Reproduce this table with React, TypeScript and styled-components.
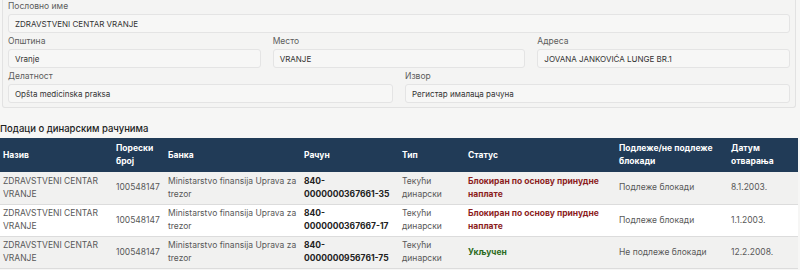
import React from "react";
import styled, { createGlobalStyle } from "styled-components";

const Global = createGlobalStyle`
  html, body { margin: 0; padding: 0; background: #f6f6f5; }
  body { font-family: Inter, "Liberation Sans", sans-serif; color: #444; }
  * { box-sizing: border-box; }
`;

const Page = styled.div`
  width: 800px;
`;

const Panel = styled.section`
  margin: 0 4px 0 2px;
  border: 1px solid #e2e2e2;
  border-top: none;
  border-radius: 0 0 3px 3px;
  background: #f4f4f3;
  padding: 0 5px 4px 5px;
  display: flex;
  flex-direction: column;
  gap: 2px;
`;

const Row = styled.div<{ $cols: number }>`
  display: grid;
  grid-template-columns: repeat(${(p) => p.$cols}, 1fr);
  column-gap: 12px;
`;

const Field = styled.div`
  display: flex;
  flex-direction: column;
`;

const Label = styled.label`
  font-size: 8.5px;
  line-height: 12px;
  color: #5c5c5c;
  margin-bottom: 2px;
`;

const Input = styled.div`
  height: 19px;
  border: 1px solid #e4e4e4;
  border-radius: 3px;
  background: #f7f7f6;
  font-size: 8px;
  color: #333;
  display: flex;
  align-items: center;
  padding: 0 6px;
`;

const Heading = styled.h3`
  margin: 14px 0 2px 0;
  font-size: 9.5px;
  line-height: 14px;
  font-weight: 500;
  color: #222;
`;

const Table = styled.table`
  width: 798px;
  border-collapse: collapse;
  table-layout: fixed;
`;

const Th = styled.th<{ $w: number }>`
  width: ${(p) => p.$w}px;
  background: #213b57;
  color: #fff;
  text-align: left;
  font-size: 8.5px;
  font-weight: 700;
  line-height: 13px;
  height: 34px;
  padding: 0 3px;
  vertical-align: middle;
`;

const Tr = styled.tr<{ $alt?: boolean }>`
  background: ${(p) => (p.$alt ? "#ffffff" : "#f1f1f0")};
  border-bottom: 1px solid #dcdcdc;
`;

const Td = styled.td<{ $tone?: "num" | "red" | "green" }>`
  font-size: 8.5px;
  line-height: 13px;
  height: 32px;
  padding: 0 3px;
  vertical-align: middle;
  color: ${(p) =>
    p.$tone === "num" ? "#222" : p.$tone === "red" ? "#8c1d1d" : p.$tone === "green" ? "#2c6b22" : "#585858"};
  font-weight: ${(p) => (p.$tone ? 700 : 400)};
`;

const cols = [
  { t: "Назив", w: 113 },
  { t: "Порески број", w: 52 },
  { t: "Банка", w: 136 },
  { t: "Рачун", w: 98 },
  { t: "Тип", w: 66 },
  { t: "Статус", w: 151 },
  { t: "Подлеже/не подлеже блокади", w: 112 },
  { t: "Датум отварања", w: 70 },
];

const rows = [
  { acc: "840-0000000367661-35", status: "Блокиран по основу принудне наплате", red: true, sub: "Подлеже блокади", date: "8.1.2003." },
  { acc: "840-0000000367667-17", status: "Блокиран по основу принудне наплате", red: true, sub: "Подлеже блокади", date: "1.1.2003." },
  { acc: "840-0000000956761-75", status: "Укључен", red: false, sub: "Не подлеже блокади", date: "12.2.2008." },
];

export default function App() {
  return (
    <Page>
      <Global />
      <Panel>
        <Row $cols={1}>
          <Field>
            <Label>Пословно име</Label>
            <Input>ZDRAVSTVENI CENTAR VRANJE</Input>
          </Field>
        </Row>
        <Row $cols={3}>
          <Field>
            <Label>Општина</Label>
            <Input>Vranje</Input>
          </Field>
          <Field>
            <Label>Место</Label>
            <Input>VRANJE</Input>
          </Field>
          <Field>
            <Label>Адреса</Label>
            <Input>JOVANA JANKOVIĆA LUNGE BR.1</Input>
          </Field>
        </Row>
        <Row $cols={2}>
          <Field>
            <Label>Делатност</Label>
            <Input>Opšta medicinska praksa</Input>
          </Field>
          <Field>
            <Label>Извор</Label>
            <Input>Регистар ималаца рачуна</Input>
          </Field>
        </Row>
      </Panel>
      <Heading>Подаци о динарским рачунима</Heading>
      <Table>
        <thead>
          <tr>
            {cols.map((c) => (
              <Th key={c.t} $w={c.w}>{c.t}</Th>
            ))}
          </tr>
        </thead>
        <tbody>
          {rows.map((r, i) => (
            <Tr key={r.acc} $alt={i === 1}>
              <Td>ZDRAVSTVENI CENTAR VRANJE</Td>
              <Td>100548147</Td>
              <Td>Ministarstvo finansija Uprava za trezor</Td>
              <Td $tone="num">{r.acc.replace("-", "-\u200b")}</Td>
              <Td>Текући динарски</Td>
              <Td $tone={r.red ? "red" : "green"}>{r.status}</Td>
              <Td>{r.sub}</Td>
              <Td>{r.date}</Td>
            </Tr>
          ))}
        </tbody>
      </Table>
    </Page>
  );
}
